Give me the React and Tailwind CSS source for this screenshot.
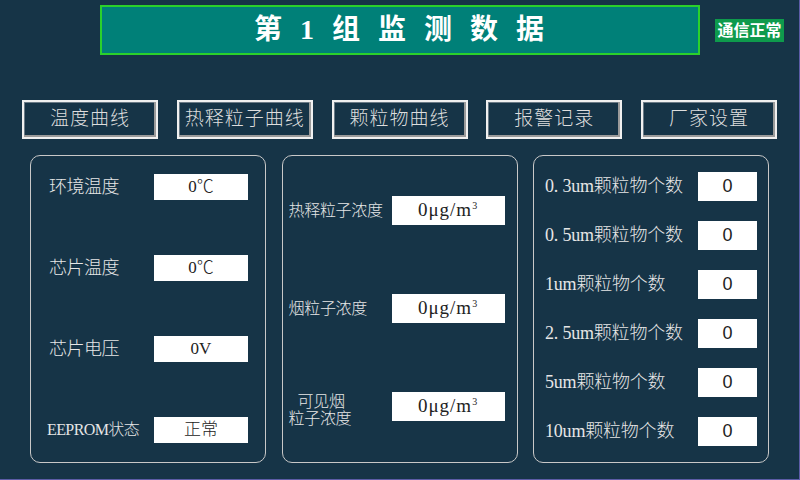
import React from 'react'

const serif = { fontFamily: '"Liberation Serif", "Noto Sans CJK SC", serif' }

const tabs = ['温度曲线', '热释粒子曲线', '颗粒物曲线', '报警记录', '厂家设置']

const envRows = [
  { label: '环境温度', value: '0℃' },
  { label: '芯片温度', value: '0℃' },
  { label: '芯片电压', value: '0V' },
  { label: 'EEPROM状态', value: '正常', small: true },
]

const densityRows = [
  { label: '热释粒子浓度' },
  { label: '烟粒子浓度' },
  { label: '可见烟粒子浓度', twoLine: true },
]

const countRows = ['0. 3um颗粒物个数', '0. 5um颗粒物个数', '1um颗粒物个数', '2. 5um颗粒物个数', '5um颗粒物个数', '10um颗粒物个数']

function Field({ children, className }) {
  return (
    <div className={`bg-white text-[#222] flex items-center justify-center ${className}`}>
      {children}
    </div>
  )
}

function Unit() {
  return (
    <span className="text-[19px] tracking-[1px]">
      0μg/m<sup className="text-[10px] relative -top-[7px]">3</sup>
    </span>
  )
}

export default function App() {
  return (
    <div
      className="w-[800px] h-[480px] bg-[#163447] overflow-hidden flex flex-col border-r border-b border-[#5c5ca6]"
      style={serif}
    >
      {/* Header */}
      <div className="flex items-start pt-[5px] h-[100px]">
        <div className="ml-[100px] w-[600px] h-[50px] bg-[#008078] border-2 border-[#2bd12b] flex items-center justify-center">
          <span className="text-white text-[28px] font-bold tracking-[2px]" style={{ wordSpacing: '7px' }}>
            第 1 组 监 测 数 据
          </span>
        </div>
        <div className="ml-[15px] mt-[14px] w-[69px] h-[23px] bg-[#0e9a4c] text-white font-bold text-[16px] leading-[23px] text-center">
          通信正常
        </div>
      </div>

      {/* Tabs */}
      <div className="flex justify-between px-[22px]">
        {tabs.map((t) => (
          <div
            key={t}
            className="w-[136px] h-[39px] border-2 border-[#f0f0f0] shadow-[inset_-2px_-2px_0_#9a9a9a,inset_1px_1px_0_#6a7a86] flex items-center justify-center text-[#dedede] text-[19px] font-light tracking-[1px]"
          >
            {t}
          </div>
        ))}
      </div>

      {/* Panels */}
      <div className="flex justify-between px-[30px] mt-[16px]">
        <div className="w-[236px] h-[308px] border border-[#c8c8c8] rounded-[10px] flex flex-col pt-[18px] pl-[18px] gap-[55px]">
          {envRows.map((r) => (
            <div key={r.label} className="flex items-center h-[26px]">
              <div
                className={`text-[#e6e6e6] font-light whitespace-nowrap ${
                  r.small ? 'w-[107px] text-[16px] -ml-[2px] tracking-[-0.6px]' : 'w-[105px] text-[18px] tracking-[-0.5px]'
                }`}
              >
                {r.label}
              </div>
              <Field className="w-[94px] h-[26px] text-[17px] font-light">{r.value}</Field>
            </div>
          ))}
        </div>

        <div className="w-[236px] h-[308px] border border-[#c8c8c8] rounded-[10px] flex flex-col pt-[40px] pl-[6px] gap-[69px]">
          {densityRows.map((r) => (
            <div key={r.label} className="flex items-center h-[29px]">
              <div className="w-[103px] text-[#e6e6e6] text-[16px] font-light leading-[17px] tracking-[-0.3px]">
                {r.twoLine ? (
                  <span className="block mt-[6px]">
                    <span className="block pl-[9px]">可见烟</span>
                    <span className="block">粒子浓度</span>
                  </span>
                ) : (
                  r.label
                )}
              </div>
              <Field className="w-[113px] h-[29px]">
                <Unit />
              </Field>
            </div>
          ))}
        </div>

        <div className="w-[236px] h-[308px] border border-[#c8c8c8] rounded-[10px] flex flex-col pt-[16px] pl-[11px] gap-[20px]">
          {countRows.map((r) => (
            <div key={r} className="flex items-center h-[29px]">
              <div className="w-[153px] text-[#e6e6e6] text-[18px] font-light whitespace-nowrap tracking-[-0.2px]">
                {r}
              </div>
              <Field className="w-[59px] h-[29px] text-[18px]">
                <span style={{ fontFamily: '"Liberation Sans", sans-serif' }}>0</span>
              </Field>
            </div>
          ))}
        </div>
      </div>
    </div>
  )
}
